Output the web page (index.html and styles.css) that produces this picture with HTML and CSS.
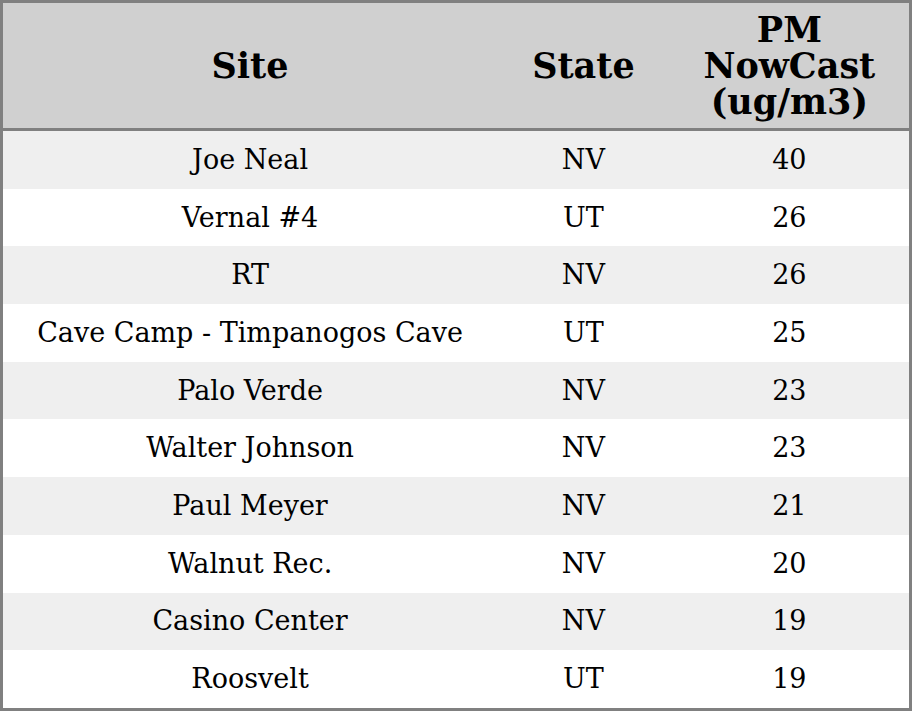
FILE: index.html
```html
<!DOCTYPE html>
<html>
<head>
<meta charset="utf-8">
<link rel="stylesheet" href="styles.css">
</head>
<body>
<table class="aq">
  <colgroup>
    <col class="c-site">
    <col class="c-state">
    <col class="c-pm">
  </colgroup>
  <thead>
    <tr><th>Site</th><th>State</th><th>PM<br>NowCast<br>(ug/m3)</th></tr>
  </thead>
  <tbody>
    <tr><td>Joe Neal</td><td>NV</td><td>40</td></tr>
    <tr><td>Vernal #4</td><td>UT</td><td>26</td></tr>
    <tr><td>RT</td><td>NV</td><td>26</td></tr>
    <tr><td>Cave Camp - Timpanogos Cave</td><td>UT</td><td>25</td></tr>
    <tr><td>Palo Verde</td><td>NV</td><td>23</td></tr>
    <tr><td>Walter Johnson</td><td>NV</td><td>23</td></tr>
    <tr><td>Paul Meyer</td><td>NV</td><td>21</td></tr>
    <tr><td>Walnut Rec.</td><td>NV</td><td>20</td></tr>
    <tr><td>Casino Center</td><td>NV</td><td>19</td></tr>
    <tr><td>Roosvelt</td><td>UT</td><td>19</td></tr>
  </tbody>
</table>
</body>
</html>
```
FILE: styles.css
```css
html, body {
  margin: 0;
  padding: 0;
  background: #ffffff;
}
.aq {
  width: 912px;
  border-collapse: collapse;
  table-layout: fixed;
  border: 3px solid #808080;
  font-family: "DejaVu Serif", serif;
  color: #000;
}
.c-site { width: 494px; }
.c-state { width: 172px; }
.c-pm { width: 240px; }
.aq th {
  background: #d0d0d0;
  font-size: 35px;
  font-weight: bold;
  line-height: 36px;
  height: 125px;
  padding: 0;
  text-align: center;
  vertical-align: middle;
  border-bottom: 3px solid #808080;
}
.aq td {
  font-size: 27px;
  line-height: 32px;
  height: 57.7px;
  padding: 0;
  text-align: center;
  vertical-align: middle;
}
.aq tbody tr:nth-child(odd) td {
  background: #efefef;
}
```
